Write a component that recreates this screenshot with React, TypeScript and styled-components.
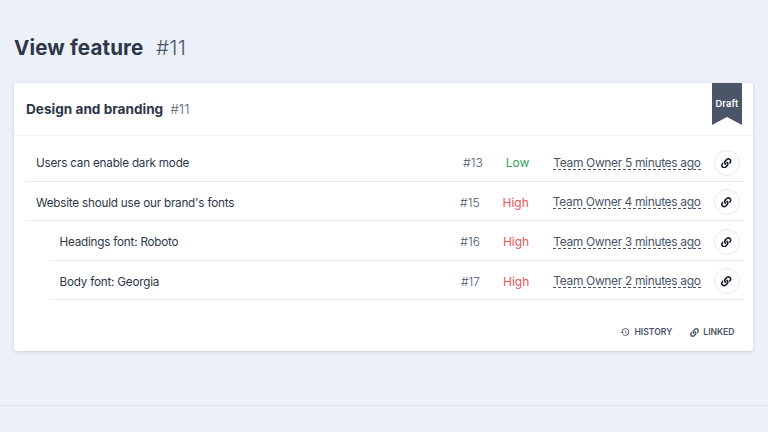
import React from "react";
import styled, { createGlobalStyle } from "styled-components";
import { FaLink } from "react-icons/fa";
import { MdHistory } from "react-icons/md";

const GlobalStyle = createGlobalStyle`
  * { box-sizing: border-box; }
  body {
    margin: 0;
    background: #ecf0f8;
    color: #2d3748;
    font-family: "Inter", "Liberation Sans", sans-serif;
    font-size: 12px;
    overflow: hidden;
  }
`;

const Page = styled.div`
  height: 432px;
  display: flex;
  flex-direction: column;
`;

const Main = styled.main`
  height: 406px;
  padding: 31px 15px 0 14px;
  border-bottom: 1px solid #e1e6ec;
`;

const PageTitle = styled.h1`
  display: flex;
  align-items: center;
  gap: 12.5px;
  height: 32px;
  margin: 0 0 20px;
  font-size: 20.5px;
  font-weight: 650;
  letter-spacing: 0.17px;
`;

const PageNumber = styled.span`
  color: #4a5568;
  font-weight: 300;
  letter-spacing: 0.3px;
`;

const Card = styled.section`
  display: flex;
  flex-direction: column;
  height: 268px;
  background: #fff;
  border-radius: 3px;
  box-shadow: 0 1px 4px rgba(45, 55, 72, 0.12), 0 1px 2px rgba(45, 55, 72, 0.05);
`;

const CardHeader = styled.header`
  display: flex;
  justify-content: space-between;
  height: 53px;
  padding: 0 11px 0 12px;
  border-bottom: 1px solid #edf0f4;
`;

const CardTitle = styled.h2`
  display: flex;
  align-items: center;
  gap: 7px;
  height: 52px;
  margin: 0;
  font-size: 13.6px;
  font-weight: 650;
`;

const CardNumber = styled.span`
  color: #5c6676;
  font-weight: 300;
`;

const Ribbon = styled.div`
  width: 30px;
  height: 42px;
  padding-top: 15px;
  background: #4a5568;
  clip-path: polygon(0 0, 100% 0, 100% 100%, 50% 81%, 0 100%);
  color: #fff;
  font-size: 9.2px;
  font-weight: 600;
  letter-spacing: 0.2px;
  line-height: 12px;
  text-align: center;
`;

const List = styled.ul`
  margin: 0;
  padding: 6px 9px 0 11px;
  list-style: none;
`;

const Row = styled.li<{ $nested?: boolean }>`
  display: grid;
  grid-template-columns: 1fr auto auto auto auto;
  align-items: center;
  height: 39.5px;
  margin-left: ${(p) => (p.$nested ? 23.5 : 0)}px;
  padding: 3px 4.5px 0 11px;
  border-bottom: 1px solid #e9edf2;
`;

const RowTitle = styled.span`
  padding-top: 2px;
  font-size: 11.7px;
  letter-spacing: -0.21px;
  line-height: 15px;
  white-space: nowrap;
`;

const RowNumber = styled.span`
  margin-right: 23px;
  color: #4a5568;
  font-weight: 350;
  line-height: 15px;
`;

const Priority = styled.span<{ $high: boolean }>`
  margin-right: 24px;
  color: ${(p) => (p.$high ? "#ec5252" : "#2fa35b")};
  line-height: 15px;
`;

const Activity = styled.span`
  height: 14px;
  margin-right: 13px;
  color: #4a5568;
  border-bottom: 1px dashed #4a5568;
  letter-spacing: -0.35px;
  line-height: 14px;
  white-space: nowrap;
`;

const LinkButton = styled.button`
  display: flex;
  align-items: center;
  justify-content: center;
  width: 26px;
  height: 26px;
  padding: 0;
  background: #fff;
  border: 1px solid #ebe7f3;
  border-radius: 50%;
  color: #1a202c;
`;

const CardFooter = styled.footer`
  display: flex;
  justify-content: flex-end;
  gap: 18px;
  margin-top: 25px;
  padding-right: 18.5px;
`;

const FooterAction = styled.button`
  display: flex;
  align-items: center;
  gap: 4px;
  height: 14px;
  padding: 0;
  background: none;
  border: 0;
  color: #4a5568;
  font: 600 8.6px "Inter", sans-serif;
`;

const rows = [
  { title: "Users can enable dark mode", id: 13, priority: "Low", minutes: 5 },
  { title: "Website should use our brand's fonts", id: 15, priority: "High", minutes: 4 },
  { title: "Headings font: Roboto", id: 16, priority: "High", minutes: 3, nested: true },
  { title: "Body font: Georgia", id: 17, priority: "High", minutes: 2, nested: true },
];

export default function App() {
  return (
    <Page>
      <GlobalStyle />
      <Main>
        <PageTitle>
          View feature <PageNumber>#11</PageNumber>
        </PageTitle>
        <Card>
          <CardHeader>
            <CardTitle>
              Design and branding <CardNumber>#11</CardNumber>
            </CardTitle>
            <Ribbon>Draft</Ribbon>
          </CardHeader>
          <List>
            {rows.map((row) => (
              <Row key={row.id} $nested={row.nested}>
                <RowTitle>{row.title}</RowTitle>
                <RowNumber>#{row.id}</RowNumber>
                <Priority $high={row.priority === "High"}>{row.priority}</Priority>
                <Activity>Team Owner {row.minutes} minutes ago</Activity>
                <LinkButton aria-label="Linked items">
                  <FaLink size={10.5} />
                </LinkButton>
              </Row>
            ))}
          </List>
          <CardFooter>
            <FooterAction>
              <MdHistory size={10} />
              HISTORY
            </FooterAction>
            <FooterAction>
              <FaLink size={9} />
              LINKED
            </FooterAction>
          </CardFooter>
        </Card>
      </Main>
    </Page>
  );
}
